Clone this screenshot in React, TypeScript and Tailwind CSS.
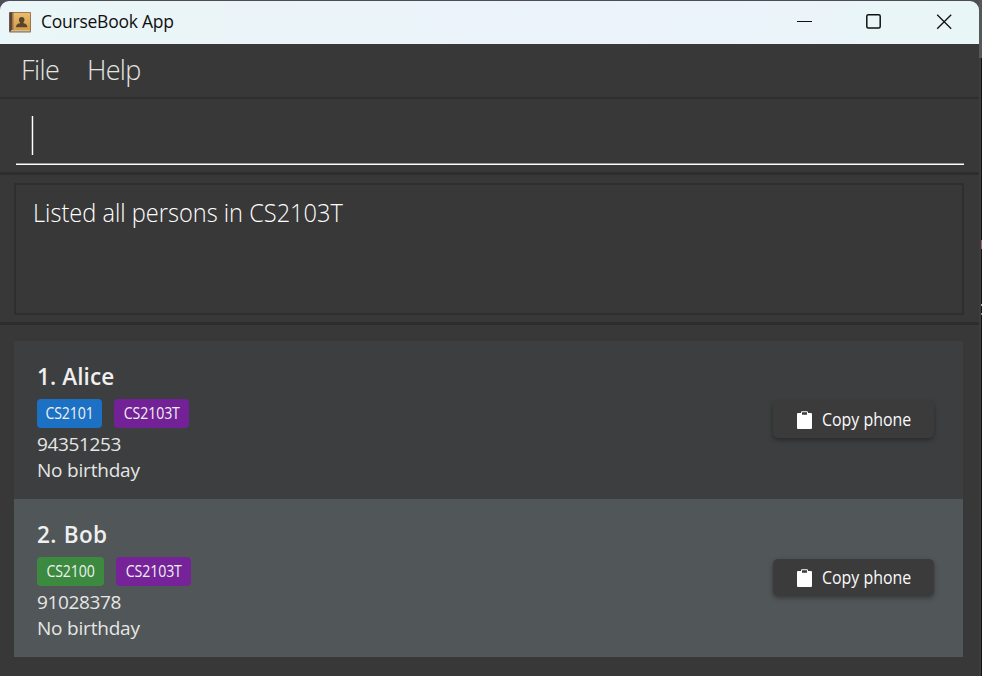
import React from "react";

type Tag = { label: string; className: string };
type Person = {
  name: string;
  nameClass: string;
  phone: string;
  tags: Tag[];
  rowClass: string;
};

const people: Person[] = [
  {
    name: "1. Alice",
    nameClass: "tracking-[0.1px]",
    phone: "94351253",
    rowClass: "bg-[#3c3e3f]",
    tags: [
      { label: "CS2101", className: "w-[65px] bg-[#1d71c4]" },
      { label: "CS2103T", className: "w-[75px] bg-[#732196]" },
    ],
  },
  {
    name: "2. Bob",
    nameClass: "tracking-[0.3px] [word-spacing:1px]",
    phone: "91028378",
    rowClass: "bg-[#515658]",
    tags: [
      { label: "CS2100", className: "w-[67px] bg-[#3b8a3f]" },
      { label: "CS2103T", className: "w-[75px] bg-[#76239a]" },
    ],
  },
];

function BookIcon() {
  return (
    <svg width="22" height="21" viewBox="0 0 22 21" className="block">
      <defs>
        <linearGradient id="cover" x1="0" y1="0" x2="0" y2="1">
          <stop offset="0" stopColor="#e9bd6d" />
          <stop offset="1" stopColor="#d39b43" />
        </linearGradient>
      </defs>
      <rect x="0" y="0" width="22" height="20.500" rx="1" fill="#8b6944" />
      <rect x="0.500" y="0.500" width="3" height="18.500" fill="#5d4438" />
      <rect x="3.300" y="1" width="1.300" height="18" fill="#a98860" />
      <rect x="4.600" y="0.800" width="16.600" height="17.400" fill="url(#cover)" />
      <rect x="2" y="18.300" width="19.200" height="1" fill="#e6ddca" />
      <path d="M12.700 5c1.800 0 2.800 1.200 2.800 2.700 0 1.100-.4 1.900-1 2.500v1.100c1.600.4 3.700.8 3.900 3.900H7c.2-3.100 2.300-3.500 3.900-3.900v-1.100c-.6-.6-1-1.400-1-2.500C9.900 6.200 10.900 5 12.700 5z" fill="#56442e" />
    </svg>
  );
}

function TitleBar() {
  return (
    <header className="flex h-[43px] shrink-0 items-center rounded-t-[9px] bg-linear-to-r from-[#eaf6f7] via-[#ecf3fb] via-65% to-[#e9f6f7] pl-[9px]">
      <BookIcon />
      <span className="ml-[10px] flex-1 pb-[3px] text-[17.5px] leading-6 tracking-[-0.25px] whitespace-nowrap text-[#101010]">CourseBook App</span>
      <svg width="190" height="43" viewBox="0 0 190 43" fill="none" stroke="#111" className="block">
        <path d="M8 20.500h15" />
        <rect x="77.800" y="13.700" width="13.400" height="13.400" rx="1.500" strokeWidth="1.500" />
        <path d="M148.200 13.700l14 14m0-14l-14 14" strokeWidth="1.300" />
      </svg>
    </header>
  );
}

function PersonRow({ person }: { person: Person }) {
  return (
    <li className={"flex h-[158px] justify-between pt-[22px] pr-[29px] pl-[23px] " + person.rowClass}>
      <div className="text-[#e6e6e6]">
        <h2 className={"h-[28px] text-[22.500px] leading-[28px] font-semibold whitespace-nowrap text-[#efefef] " + person.nameClass}>{person.name}</h2>
        <div className="mt-2 flex gap-3">
          {person.tags.map((tag) => (
            <span key={tag.label} className={"flex h-[29px] items-center justify-center rounded-[4px] text-[15.500px] tracking-[-0.1px] text-[#f2f2f2] " + tag.className}>
              <span className="block scale-x-[0.91]">{tag.label}</span>
            </span>
          ))}
        </div>
        <p className="mt-[3px] h-[26px] text-[19px] leading-[26px] tracking-[-0.35px]">{person.phone}</p>
        <p className="h-[26px] text-[19px] leading-[26px] tracking-[-0.2px]">No birthday</p>
      </div>
      <button className="mt-[38px] flex h-[37px] w-[161px] items-center rounded-[5px] bg-[#3b3b3b] pl-[24px] text-[17.500px] whitespace-nowrap text-[#fafafa] shadow-[0_2px_5px_rgba(0,0,0,0.35)]">
        <svg width="15" height="18" viewBox="0 0 15 18" className="block shrink-0">
          <path fill="#fff" fillRule="evenodd" d="M1 2h3V1.300Q4 .2 5.100.2h4.800Q11 .2 11 1.300V2h3q1 0 1 1v14q0 1-1 1H1q-1 0-1-1V3q0-1 1-1zm4-.8V3.800h5V1.200z" />
        </svg>
        <span className="ml-[10px] block origin-left scale-x-[0.91]">Copy phone</span>
      </button>
    </li>
  );
}

export default function App() {
  return (
    <div className="flex h-[676px] w-[982px] overflow-hidden bg-[#4c4d55] font-['Open_Sans','Noto_Sans',sans-serif]">
      <div className="flex w-[979px] flex-col pt-px">
        <TitleBar />
        <main className="flex flex-1 flex-col bg-[#383838]">
          <nav className="flex h-[55px] border-b-2 border-[#2e2e2e] pl-[21px] text-[27px] leading-[52px] font-light text-[#e4e4e4]">
            <span className="w-[66px] tracking-[-0.6px]">File</span>
            <span className="tracking-[-0.7px]">Help</span>
          </nav>
          <div className="h-[76px] border-b-[3px] border-[#2d2d2d] px-[15px] pt-[17px]">
            <div className="ml-px flex h-[49px] flex-col border-b border-white pl-[15px]">
              <div className="h-[39px] w-[3px] border-x border-l-[#6a6a6a] border-r-[#606060] bg-white" />
              <div className="mt-auto -ml-[15px] h-px bg-[#999]" />
            </div>
          </div>
          <section className="h-[150px] border-b-[3px] border-[#2d2d2d] px-[14px] pt-[8px]">
            <div className="h-[132px] w-[950px] border-2 border-[#2e2e2e] pt-[9px] pl-[17px] text-[25.500px] leading-[37px] font-light whitespace-nowrap text-white">
              <p className="origin-left scale-x-[0.925]">Listed all persons in CS2103T</p>
            </div>
          </section>
          <ul className="mt-[16px] ml-[14px] w-[949px]">
            {people.map((person) => (
              <PersonRow key={person.name} person={person} />
            ))}
          </ul>
        </main>
      </div>
      <aside className="flex w-[3px] flex-col bg-[#141414]">
        <div className="h-[58px] bg-[#555855]" />
        <div className="flex flex-1 border-l-2 border-[#3d3d3f]">
          <div className="w-px pt-[182px]">
            <div className="h-[9px] bg-[#9a6878]" />
            <div className="mt-[55px] h-[2px] bg-[#9fb0bc]" />
            <div className="mt-[7px] h-[2px] bg-[#8a949c]" />
          </div>
        </div>
      </aside>
    </div>
  );
}
